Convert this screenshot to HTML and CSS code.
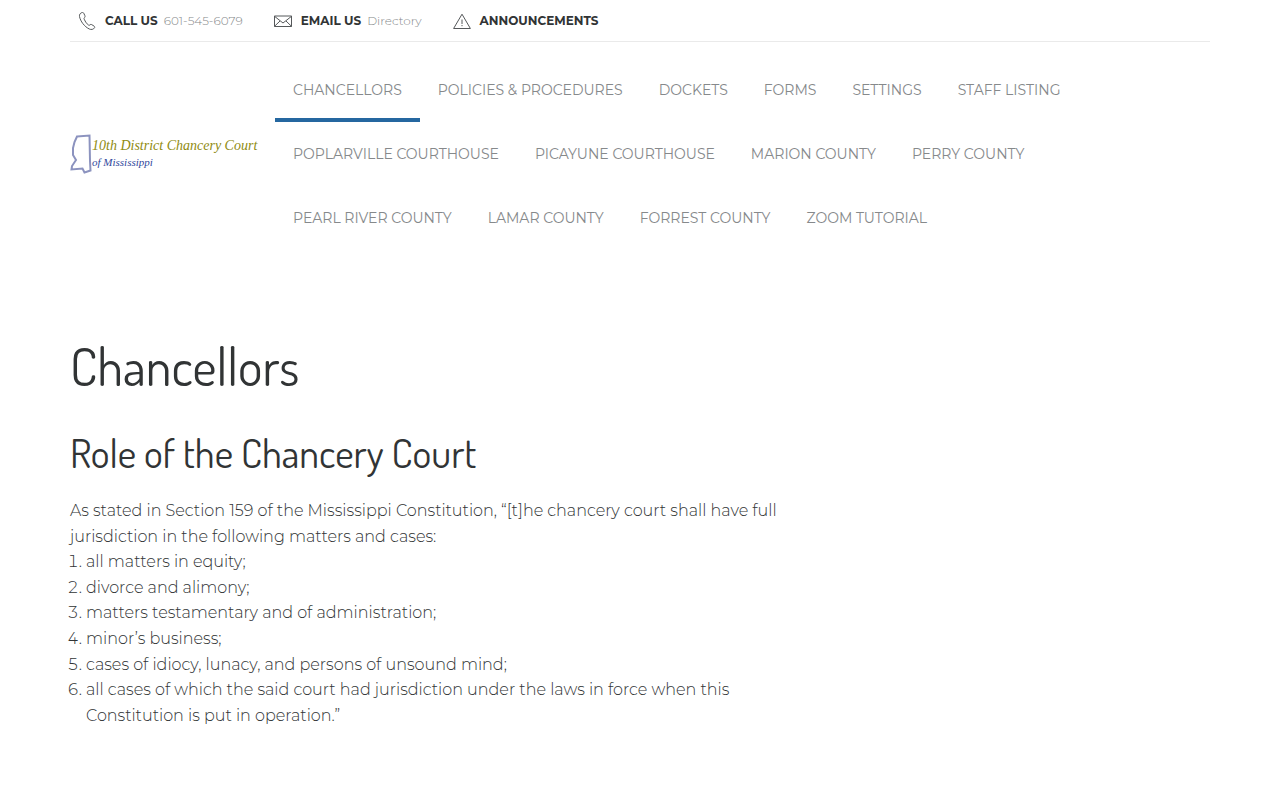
FILE: index.html
```html
<!DOCTYPE html>
<html lang="en">
<head>
    <meta charset="utf-8">
    <meta name="viewport" content="width=device-width, initial-scale=1">
    <title>Chancellors - 10th District Chancery Court</title>
    <link rel="stylesheet" href="styles.css">
</head>
<body>
    <div class="container">
        <div class="topbar">
            <div class="contact">
                <svg class="icon" viewBox="0 0 18 18">
                    <path d="M3.800.6C2.200 1.200 1.200 2.600 1.500 4.500c.9 4.800 5 10.200 9.800 12.500 1.900.9 4.200.5 5.200-1.200.4-.6.200-1.200-.3-1.600l-2.500-1.600c-.6-.4-1.200-.2-1.700.2-.7.600-1.300.9-2-.1C8.300 11.300 7 9.200 6.200 7.200c-.4-.9 0-1.200.4-1.700.5-.6.600-1.100.3-1.800L5.800 1.300C5.400.5 4.600.3 3.800.6z"/>
                </svg>
                <strong>CALL US</strong>
                <a href="tel:6015456079">601-545-6079</a>
            </div>
            <div class="contact">
                <svg class="icon" viewBox="0 0 18 18">
                    <path d="M.5 4h17v10.500H.5zM.5 4.300L9 11l8.500-6.700M.5 14.300L6 9M17.500 14.300L12 9"/>
                </svg>
                <strong>EMAIL US</strong>
                <a href="#">Directory</a>
            </div>
            <div class="contact">
                <svg class="icon" viewBox="0 0 18 18">
                    <path d="M9 2.200L17.400 16.500H.6zM9 7.500v4.500M9 13v1.200"/>
                </svg>
                <a class="announce" href="#">ANNOUNCEMENTS</a>
            </div>
        </div>

        <header class="header">
            <a class="logo" href="#">
                <svg class="state" viewBox="0 0 22 42">
                    <path d="M7 3.500L19.500 2.500 20 28 20.500 37.500 14.500 39.500 12.500 35.500 1.500 36.500 2 33 6 27 3 22 3 15 4.500 9z"/>
                </svg>
                <span class="logo-text">
                    <span class="logo-name">10th District Chancery Court</span>
                    <span class="logo-place">of Mississippi</span>
                </span>
            </a>
            <nav class="nav">
                <a class="active" href="#">CHANCELLORS</a>
                <a href="#">POLICIES &amp; PROCEDURES</a>
                <a href="#">DOCKETS</a>
                <a href="#">FORMS</a>
                <a href="#">SETTINGS</a>
                <a href="#">STAFF LISTING</a>
                <a href="#">POPLARVILLE COURTHOUSE</a>
                <a href="#">PICAYUNE COURTHOUSE</a>
                <a href="#">MARION COUNTY</a>
                <a href="#">PERRY COUNTY</a>
                <a href="#">PEARL RIVER COUNTY</a>
                <a href="#">LAMAR COUNTY</a>
                <a href="#">FORREST COUNTY</a>
                <a href="#">ZOOM TUTORIAL</a>
            </nav>
        </header>

        <main class="content">
            <h1>Chancellors</h1>
            <h2>Role of the Chancery Court</h2>
            <p>As stated in Section 159 of the Mississippi Constitution, “[t]he chancery court shall have full jurisdiction in the following matters and cases:</p>
            <ol>
                <li>all matters in equity;</li>
                <li>divorce and alimony;</li>
                <li>matters testamentary and of administration;</li>
                <li>minor’s business;</li>
                <li>cases of idiocy, lunacy, and persons of unsound mind;</li>
                <li>all cases of which the said court had jurisdiction under the laws in force when this Constitution is put in operation.”</li>
            </ol>
        </main>
    </div>
</body>
</html>
```
FILE: styles.css
```css
* {
    box-sizing: border-box;
}
body {
    margin: 0;
    font-family: Montserrat, Inter, sans-serif;
    font-size: 16px;
    font-weight: 300;
    line-height: 1.6;
    color: #313435;
    background-color: #ffffff;
}
a {
    color: inherit;
    text-decoration: none;
}
.container {
    max-width: 1180px;
    margin: 0 auto;
    padding: 0 20px;
}
.topbar {
    display: flex;
    gap: 31px;
    height: 42px;
    padding-left: 8px;
    border-bottom: 1px solid #eaeaea;
    font-size: 12px;
}
.contact {
    display: flex;
    align-items: center;
    gap: 6px;
}
.contact strong,
.announce {
    font-weight: 700;
}
.contact a {
    color: #86898b;
}
.contact .announce {
    color: #313435;
}
.icon {
    width: 18px;
    height: 18px;
    margin-right: 3px;
    fill: none;
    stroke: #55585a;
    stroke-width: 1;
}
.header {
    display: flex;
    align-items: center;
    gap: 20px;
    padding-top: 16px;
}
.logo {
    display: flex;
    flex: none;
    align-items: center;
    width: 185px;
}
.state {
    flex: none;
    width: 22px;
    height: 42px;
    fill: none;
    stroke: #8c93bf;
    stroke-width: 2;
}
.logo-text {
    display: flex;
    flex-direction: column;
    font-family: "Liberation Serif", serif;
    font-style: italic;
    font-weight: 400;
    line-height: 17px;
    white-space: nowrap;
}
.logo-name {
    font-size: 14px;
    color: #8f8b10;
}
.logo-place {
    font-size: 11px;
    color: #2f479c;
}
.nav {
    display: flex;
    flex-wrap: wrap;
}
.nav a {
    height: 64px;
    padding: 0 18px;
    border-bottom: 4px solid transparent;
    font-size: 14px;
    font-weight: 400;
    line-height: 64px;
    color: #86898b;
}
.nav .active {
    border-bottom-color: #2567a0;
}
.content {
    max-width: 720px;
    padding: 80px 0;
}
h1,
h2 {
    font-family: Dosis, "Liberation Sans Narrow", Lato, sans-serif;
    font-weight: 400;
}
h1 {
    margin: 0 0 20px;
    font-size: 52px;
    line-height: 72px;
}
h2 {
    margin: 0 0 16px;
    font-size: 40px;
    line-height: 60px;
}
p,
ol {
    margin: 0;
}
ol {
    padding-left: 16px;
}
```
